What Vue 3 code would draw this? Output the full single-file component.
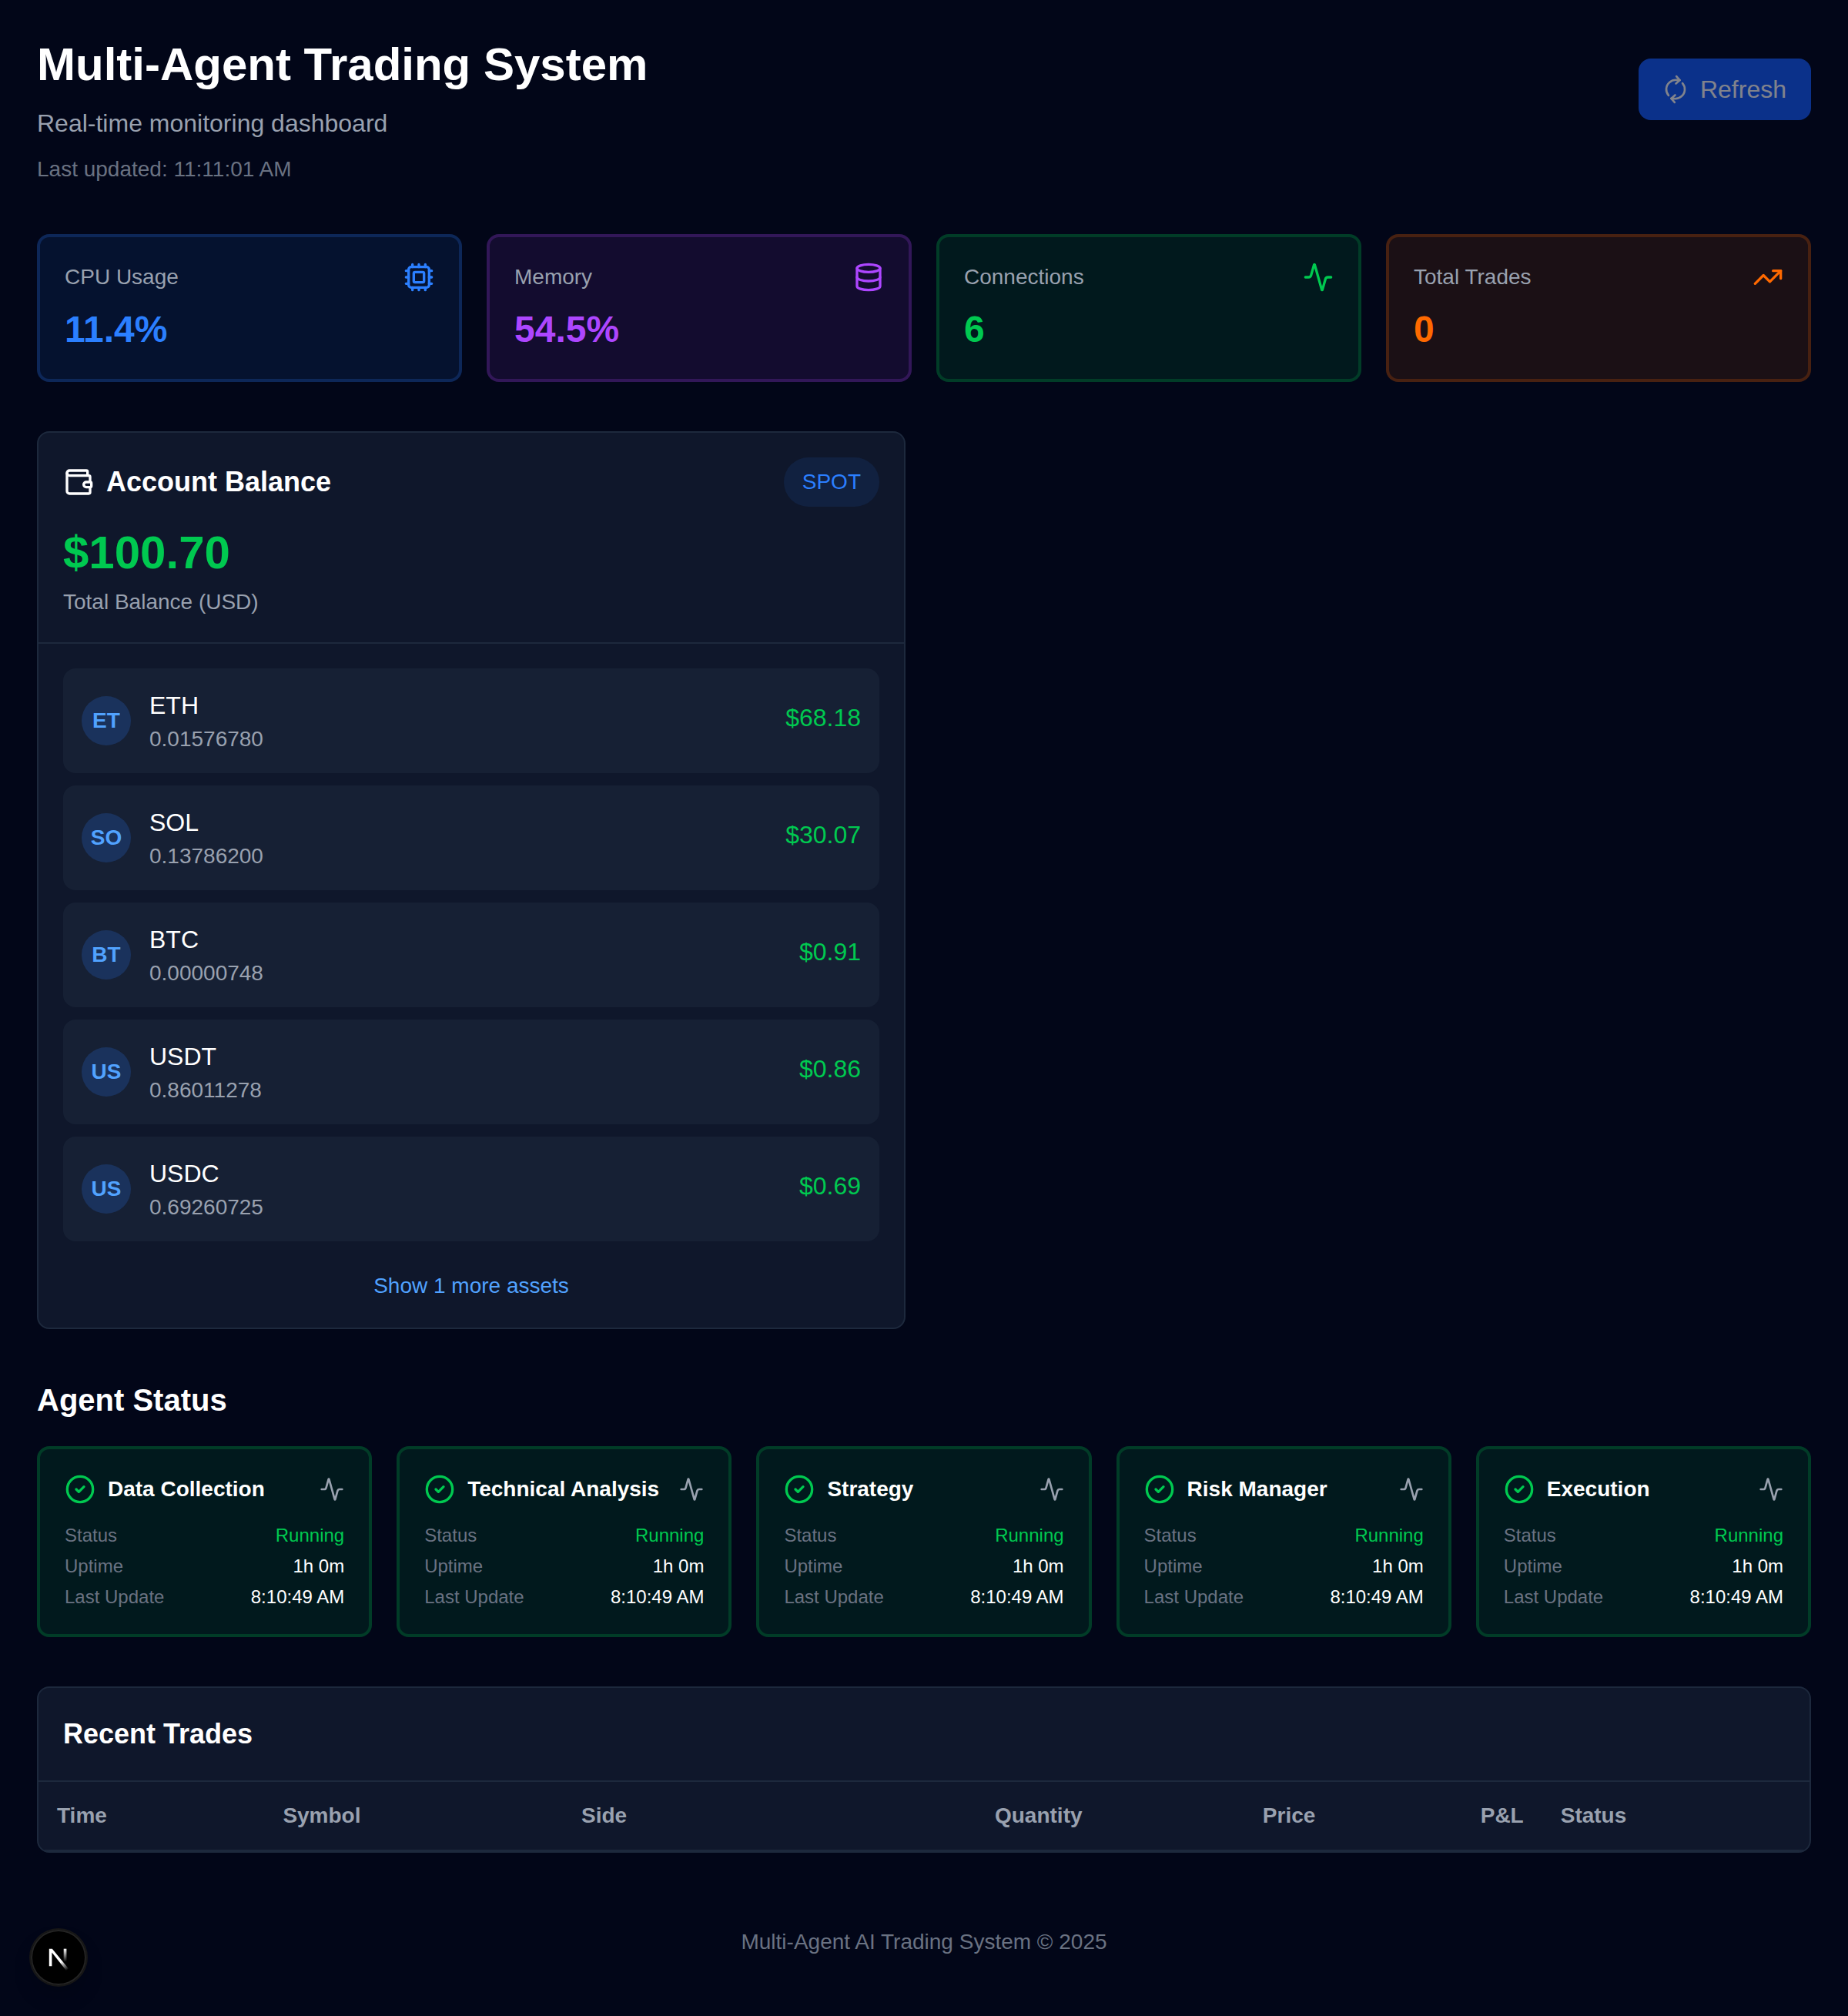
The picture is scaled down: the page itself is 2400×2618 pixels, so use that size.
<script setup>
import { h } from 'vue'

const shapes = {
  cpu: [
    ['path', { d: 'M12 20v2M12 2v2M17 20v2M17 2v2M2 12h2M2 17h2M2 7h2M20 12h2M20 17h2M20 7h2M7 20v2M7 2v2' }],
    ['rect', { x: 4, y: 4, width: 16, height: 16, rx: 2 }],
    ['rect', { x: 8, y: 8, width: 8, height: 8, rx: 1 }],
  ],
  database: [
    ['ellipse', { cx: 12, cy: 5, rx: 9, ry: 3 }],
    ['path', { d: 'M3 5V19A9 3 0 0 0 21 19V5' }],
    ['path', { d: 'M3 12A9 3 0 0 0 21 12' }],
  ],
  activity: [
    ['path', { d: 'M22 12h-2.48a2 2 0 0 0-1.93 1.46l-2.35 8.36a.25.25 0 0 1-.48 0L9.24 2.18a.25.25 0 0 0-.48 0l-2.35 8.36A2 2 0 0 1 4.49 12H2' }],
  ],
  trending: [
    ['path', { d: 'M16 7h6v6' }],
    ['path', { d: 'm22 7-8.5 8.5-5-5L2 17' }],
  ],
  wallet: [
    ['path', { d: 'M19 7V4a1 1 0 0 0-1-1H5a2 2 0 0 0 0 4h15a1 1 0 0 1 1 1v4h-3a2 2 0 0 0 0 4h3a1 1 0 0 0 1-1v-2a1 1 0 0 0-1-1' }],
    ['path', { d: 'M3 5v14a2 2 0 0 0 2 2h15a1 1 0 0 0 1-1v-4' }],
  ],
  check: [
    ['circle', { cx: 12, cy: 12, r: 10 }],
    ['path', { d: 'm9 12 2 2 4-4' }],
  ],
  refresh: [
    ['path', { d: 'M3 12a9 9 0 0 1 9-9 9.75 9.75 0 0 1 6.74 2.74L21 8' }],
    ['path', { d: 'M21 3v5h-5' }],
    ['path', { d: 'M21 12a9 9 0 0 1-9 9 9.75 9.75 0 0 1-6.74-2.74L3 16' }],
    ['path', { d: 'M8 16H3v5' }],
  ],
}

const Icon = (props) =>
  h(
    'svg',
    {
      viewBox: '0 0 24 24',
      fill: 'none',
      stroke: 'currentColor',
      'stroke-width': 2,
      'stroke-linecap': 'round',
      'stroke-linejoin': 'round',
      'aria-hidden': 'true',
    },
    shapes[props.name].map(([tag, attrs]) => h(tag, attrs)),
  )
Icon.props = ['name']

const metrics = [
  { label: 'CPU Usage', value: '11.4%', icon: 'cpu', tone: 'blue' },
  { label: 'Memory', value: '54.5%', icon: 'database', tone: 'purple' },
  { label: 'Connections', value: '6', icon: 'activity', tone: 'green' },
  { label: 'Total Trades', value: '0', icon: 'trending', tone: 'orange' },
]

const assets = [
  { symbol: 'ETH', amount: '0.01576780', value: '$68.18' },
  { symbol: 'SOL', amount: '0.13786200', value: '$30.07' },
  { symbol: 'BTC', amount: '0.00000748', value: '$0.91' },
  { symbol: 'USDT', amount: '0.86011278', value: '$0.86' },
  { symbol: 'USDC', amount: '0.69260725', value: '$0.69' },
]

const agents = ['Data Collection', 'Technical Analysis', 'Strategy', 'Risk Manager', 'Execution']

const columns = [
  { label: 'Time' },
  { label: 'Symbol' },
  { label: 'Side' },
  { label: 'Quantity', numeric: true },
  { label: 'Price', numeric: true },
  { label: 'P&L', numeric: true },
  { label: 'Status' },
]
</script>

<template>
  <div class="page">
    <header class="header">
      <div class="intro">
        <h1 class="title">Multi-Agent Trading System</h1>
        <p class="subtitle">Real-time monitoring dashboard</p>
        <p class="updated">Last updated: 11:11:01 AM</p>
      </div>
      <button class="refresh" type="button" disabled>
        <Icon name="refresh" class="icon-sm spinning" />
        Refresh
      </button>
    </header>

    <main class="main">
      <section class="metrics">
        <article v-for="m in metrics" :key="m.label" class="tile" :class="m.tone">
          <div class="tile-head">
            <span class="label">{{ m.label }}</span>
            <Icon :name="m.icon" class="icon-md tone" />
          </div>
          <p class="metric tone">{{ m.value }}</p>
        </article>
      </section>

      <div class="columns">
        <section class="panel">
          <div class="panel-head">
            <div class="account-bar">
              <h2 class="panel-title"><Icon name="wallet" class="icon-md" />Account Balance</h2>
              <span class="pill">SPOT</span>
            </div>
            <p class="total">$100.70</p>
            <p class="label total-label">Total Balance (USD)</p>
          </div>
          <div class="account-body">
            <ul class="assets">
              <li v-for="a in assets" :key="a.symbol" class="asset">
                <span class="avatar">{{ a.symbol.slice(0, 2) }}</span>
                <div class="asset-name">
                  <p class="symbol">{{ a.symbol }}</p>
                  <p class="label">{{ a.amount }}</p>
                </div>
                <p class="asset-value">{{ a.value }}</p>
              </li>
            </ul>
            <div class="more"><button class="more-button" type="button">Show 1 more assets</button></div>
          </div>
        </section>
      </div>

      <section>
        <h2 class="section-title">Agent Status</h2>
        <div class="agents">
          <article v-for="name in agents" :key="name" class="tile green">
            <div class="agent-head">
              <Icon name="check" class="icon-md tone" />
              <h3 class="agent-name">{{ name }}</h3>
              <Icon name="activity" class="icon-sm pulse" />
            </div>
            <dl class="facts">
              <div class="fact"><dt>Status</dt><dd class="tone">Running</dd></div>
              <div class="fact"><dt>Uptime</dt><dd>1h 0m</dd></div>
              <div class="fact"><dt>Last Update</dt><dd>8:10:49 AM</dd></div>
            </dl>
          </article>
        </div>
      </section>

      <section class="panel">
        <div class="panel-head">
          <h2 class="panel-title">Recent Trades</h2>
        </div>
        <table class="trades">
          <thead>
            <tr>
              <th v-for="c in columns" :key="c.label" scope="col" :class="{ numeric: c.numeric }">{{ c.label }}</th>
            </tr>
          </thead>
        </table>
      </section>
    </main>

    <footer class="footer">Multi-Agent AI Trading System © 2025</footer>

    <button class="dev-badge" type="button" aria-label="Open Next.js Dev Tools">
      <svg class="dev-mark" viewBox="0 0 40 40" fill="none" aria-hidden="true">
        <defs>
          <linearGradient id="stem" x1="0" y1="0" x2="0" y2="1">
            <stop stop-color="#fff" />
            <stop offset="1" stop-color="#fff" stop-opacity="0" />
          </linearGradient>
          <linearGradient id="diagonal" gradientUnits="userSpaceOnUse" x1="24" y1="25" x2="32" y2="36">
            <stop stop-color="#fff" />
            <stop offset="1" stop-color="#fff" stop-opacity="0" />
          </linearGradient>
        </defs>
        <path d="M7.8 31.3V8.7h4L33 34.6 30 37 11.4 13.6V31.3Z" fill="url(#diagonal)" />
        <rect x="26.7" y="8.7" width="3.7" height="17" fill="url(#stem)" />
      </svg>
    </button>
  </div>
</template>

<style>
body {
  margin: 0;
  background: #020618;
}
</style>

<style scoped>
.page {
  box-sizing: border-box;
  min-height: 100vh;
  padding: 48px;
  background: #020618;
  color: #fff;
  font-family: "Liberation Sans", Arial, sans-serif;
  font-size: 32px;
  line-height: 48px;
}

h1, h2, h3, p, ul, dl, dd {
  margin: 0;
  padding: 0;
}

button {
  border: 0;
  font-family: inherit;
}

.icon-sm,
.icon-md {
  flex: none;
  display: block;
}
.icon-sm { width: 32px; height: 32px; }
.icon-md { width: 40px; height: 40px; }

.header {
  display: flex;
  align-items: center;
  justify-content: space-between;
  margin-bottom: 64px;
}
.header .intro {
  display: flex;
  flex-direction: column;
  gap: 16px;
}
.title {
  font-size: 60px;
  line-height: 72px;
}
.subtitle { color: #99a1af; }
.updated {
  color: #6a7282;
  font-size: 28px;
  line-height: 40px;
}
.refresh {
  align-self: flex-start;
  display: flex;
  align-items: center;
  gap: 16px;
  margin-top: 28px;
  padding: 16px 32px;
  border-radius: 16px;
  background: #155dfc;
  color: #fff;
  font-size: 32px;
  line-height: 48px;
  opacity: 0.5;
}
.spinning { transform: rotate(-41deg); }

.main {
  display: flex;
  flex-direction: column;
  gap: 64px;
}

.metrics {
  display: grid;
  grid-template-columns: repeat(4, 1fr);
  gap: 32px;
}
.tile {
  padding: 32px;
  border: 4px solid;
  border-radius: 16px;
}
.blue { border-color: #2b7fff33; background: #2b7fff1a; }
.purple { border-color: #ad46ff33; background: #ad46ff1a; }
.green { border-color: #00c95033; background: #00c9501a; }
.orange { border-color: #ff690033; background: #ff69001a; }
.blue .tone { color: #2b7fff; }
.purple .tone { color: #ad46ff; }
.green .tone { color: #00c950; }
.orange .tone { color: #ff6900; }
.tile-head {
  display: flex;
  align-items: center;
  justify-content: space-between;
  margin-bottom: 16px;
}
.label {
  color: #99a1af;
  font-size: 28px;
  line-height: 40px;
}
.metric {
  font-size: 48px;
  font-weight: 700;
  line-height: 64px;
}

.columns {
  display: grid;
  grid-template-columns: repeat(2, 1fr);
  gap: 48px;
}
.panel {
  overflow: hidden;
  border: 2px solid #1d293d;
  border-radius: 16px;
  background: #0f172b;
}
.panel-head {
  padding: 32px;
  border-bottom: 2px solid #1d293d;
}
.panel-title {
  display: flex;
  align-items: center;
  gap: 16px;
  font-size: 36px;
  line-height: 56px;
}
.account-bar {
  display: flex;
  align-items: center;
  justify-content: space-between;
  margin-bottom: 24px;
}
.pill {
  padding: 12px 24px;
  border-radius: 32px;
  background: #2b7fff1a;
  color: #2b7fff;
  font-size: 28px;
  line-height: 40px;
}
.total {
  color: #00c950;
  font-size: 60px;
  font-weight: 700;
  line-height: 72px;
}
.total-label { margin-top: 8px; }

.account-body { padding: 32px; }
.assets {
  display: flex;
  flex-direction: column;
  gap: 16px;
  list-style: none;
}
.asset {
  display: flex;
  align-items: center;
  gap: 24px;
  padding: 24px;
  border-radius: 16px;
  background: #1d293d80;
}
.avatar {
  display: grid;
  place-items: center;
  width: 64px;
  height: 64px;
  border-radius: 50%;
  background: #2b7fff33;
  color: #51a2ff;
  font-size: 28px;
  font-weight: 700;
  line-height: 40px;
}
.asset-name { flex: 1; }
.asset-value {
  padding-bottom: 8px;
  color: #00c950;
}
.more {
  margin-top: 32px;
  text-align: center;
}
.more-button {
  padding: 0;
  background: none;
  color: #51a2ff;
  font-size: 28px;
  line-height: 40px;
}

.section-title {
  margin-bottom: 32px;
  font-size: 40px;
  line-height: 56px;
}
.agents {
  display: grid;
  grid-template-columns: repeat(5, 1fr);
  gap: 32px;
}
.agent-head {
  display: flex;
  align-items: center;
  gap: 16px;
  margin-bottom: 24px;
}
.agent-name {
  flex: 1;
  font-size: 28px;
  line-height: 40px;
  white-space: nowrap;
}
.pulse { color: #99a1af; }
.facts {
  display: flex;
  flex-direction: column;
  gap: 8px;
  font-size: 24px;
  line-height: 32px;
}
.fact {
  display: flex;
  justify-content: space-between;
}
.fact dt { color: #6a7282; }

.trades {
  width: 100%;
  border-collapse: collapse;
}
.trades tr { border-bottom: 2px solid #1d293d; }
.trades th {
  padding: 24px;
  color: #99a1af;
  font-size: 28px;
  line-height: 40px;
  text-align: left;
}
.trades .numeric { text-align: right; }

.footer {
  margin-top: 96px;
  color: #6a7282;
  font-size: 28px;
  line-height: 40px;
  text-align: center;
}

.dev-badge {
  position: fixed;
  left: 40px;
  bottom: 40px;
  display: grid;
  place-items: center;
  width: 72px;
  height: 72px;
  padding: 0;
  border-radius: 50%;
  background: #000;
  box-shadow: 0 0 0 2px #171717, inset 0 0 0 2px #242424, 0 16px 32px -8px #0000003d;
}
.dev-mark {
  width: 40px;
  height: 40px;
}
</style>
